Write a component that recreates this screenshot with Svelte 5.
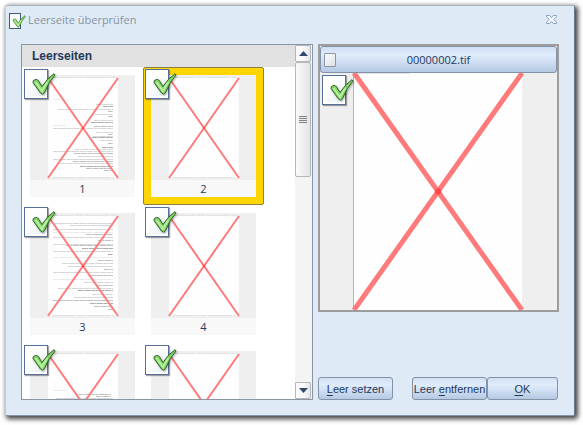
<script>
  let pages = $state([
    { id: 1, blank: true, lines: 'short' },
    { id: 2, blank: true, lines: null },
    { id: 3, blank: true, lines: 'full' },
    { id: 4, blank: true, lines: null },
    { id: 5, blank: true, lines: 'late' },
    { id: 6, blank: true, lines: null }
  ]);

  let selected = $state(2);

  // y, start, end, strength
  const textLines = {
    short: [
      [22, 5, 12, 1], [27, 48, 65, 2], [29, 55, 65, 4], [32, 10, 65, 2], [34, 60, 65, 3],
      [37, 47, 65, 2], [39, 60, 65, 3], [43, 46, 65, 2], [45, 43, 65, 4], [48, 5, 18, 1],
      [49, 46, 65, 3], [51, 5, 65, 2], [55, 48, 65, 2], [57, 60, 65, 3], [59, 45, 65, 2],
      [60, 44, 65, 4], [63, 52, 65, 2], [66, 60, 65, 3], [70, 54, 65, 4], [72, 27, 65, 2],
      [74, 5, 65, 2], [76, 26, 65, 3], [79, 30, 65, 2], [82, 5, 65, 2], [84, 25, 65, 3],
      [86, 12, 65, 2], [89, 32, 65, 4], [91, 38, 65, 3], [93, 56, 65, 3]
    ],
    full: [
      [8, 5, 65, 2], [10, 22, 65, 2], [14, 5, 65, 2], [17, 5, 65, 1], [19, 38, 65, 3],
      [22, 5, 65, 2], [25, 50, 65, 3], [29, 5, 65, 2], [30, 18, 65, 3], [33, 34, 65, 4],
      [36, 5, 65, 2], [39, 60, 65, 4], [42, 5, 65, 1], [45, 50, 65, 3], [48, 14, 65, 2],
      [51, 20, 65, 2], [54, 56, 65, 3], [57, 5, 65, 2], [60, 42, 65, 3], [64, 5, 65, 1],
      [67, 36, 65, 2], [70, 48, 65, 3], [73, 10, 65, 2], [75, 30, 65, 4], [79, 44, 65, 2],
      [82, 26, 65, 2], [85, 5, 65, 3], [88, 42, 65, 4], [91, 46, 65, 3], [94, 60, 65, 3]
    ],
    late: [
      [37, 5, 18, 1], [41, 30, 63, 3], [43, 48, 63, 3], [45, 8, 65, 2], [48, 30, 65, 3],
      [51, 10, 65, 2], [54, 36, 65, 3]
    ]
  };
</script>

{#snippet tick()}
  <svg class="tick" viewBox="0 0 32 30" aria-hidden="true">
    <path
      d="M9 13.5Q8.500 11 11.500 10.500Q13.500 10 14.500 12L18 17.500Q23 9.500 30 4.700L31 6Q24.500 13 20.500 23.500Q18.500 26.500 16.500 24Z"
      fill="#7fd463"
      stroke="#2f6428"
      stroke-linejoin="round"
    />
    <path d="M11.500 13L18 22Q20.500 17 23.500 13" fill="none" stroke="#b9efa0" stroke-width="2" />
  </svg>
{/snippet}

{#snippet mark(page)}
  <label class="mark">
    <input type="checkbox" aria-label="Seite {page.id} ist leer" bind:checked={page.blank} />
    {#if page.blank}{@render tick()}{/if}
  </label>
{/snippet}

<div class="screen">
  <main class="dialog">
    <header class="titlebar">
      <span class="app-icon">{@render tick()}</span>
      <h1>Leerseite überprüfen</h1>
      <button class="close" aria-label="Schließen">
        <svg viewBox="0 0 12 10" aria-hidden="true">
          <path
            d="M.5.5H4L6 3 8 .5h3.500V2L8.500 5l3 3v1.500H8L6 7 4 9.500H.5V8l3-3-3-3Z"
            fill="#f4f9ff"
            stroke="#7f96b2"
          />
        </svg>
      </button>
    </header>

    <div class="content">
      <section class="list">
        <div class="list-main">
          <h2>Leerseiten</h2>
          <div class="tiles">
            {#each pages as page (page.id)}
              <div class="tile" class:selected={page.id === selected}>
                <button class="thumb" onclick={() => (selected = page.id)}>
                  <span class="thumb-area">
                    <svg viewBox="0 0 105 105" aria-hidden="true">
                      <rect x="18" y="2" width="70" height="101" fill="#fefefe" />
                      <path d="M20 2.500H87M22 102.500H84" stroke="#e2e2e2" stroke-dasharray="24 1 9 1" />
                      {#if page.lines}
                        {#each textLines[page.lines] as [y, from, to, strength]}
                          <path
                            d="M{from + 18} {y + 2.5}H{to + 18}"
                            stroke="#444"
                            stroke-opacity={strength * 0.11}
                            stroke-dasharray="4 .4 2 .5 6 .6"
                          />
                        {/each}
                      {/if}
                      {#if page.blank}
                        <path d="M18 3L88 103M88 3L18 103" stroke="#ff7b7b" stroke-width="2" />
                        <rect x="52" y="52" width="2" height="2" fill="#ff4545" />
                      {/if}
                    </svg>
                  </span>
                  <span class="caption">{page.id}</span>
                </button>
                {@render mark(page)}
              </div>
            {/each}
          </div>
        </div>
        <div class="scrollbar">
          <button class="arrow" aria-label="Nach oben">
            <svg viewBox="0 0 9 5" aria-hidden="true"><path d="M0 5L4.500 0 9 5Z" fill="#33456f" /></svg>
          </button>
          <div class="track">
            <div class="handle"><i></i><i></i><i></i><i></i></div>
          </div>
          <button class="arrow" aria-label="Nach unten">
            <svg viewBox="0 0 9 5" aria-hidden="true"><path d="M0 0L4.500 5 9 0Z" fill="#33456f" /></svg>
          </button>
        </div>
      </section>

      <section class="side">
        <div class="viewer">
          <button class="file">
            <span class="file-icon"></span>
            <span class="file-name">0000000{selected}.tif</span>
          </button>
          <div class="preview">
            <svg class="sheet" viewBox="0 0 237 237" aria-hidden="true">
              <rect x="34" width="168" height="237" fill="#fefefe" />
              <path d="M33.500 0V237" stroke="#b5b5b5" />
              <path d="M36 0H90" stroke="#c9c9c9" />
              {#if pages[selected - 1].blank}
                <path d="M34 0L202 237M202 0L34 237" stroke="#ff7b7b" stroke-width="5" />
                <circle cx="118" cy="118.500" r="3" fill="#ff4545" />
              {/if}
            </svg>
            {@render mark(pages[selected - 1])}
          </div>
        </div>

        <footer class="actions">
          <button class="action" onclick={() => (pages[selected - 1].blank = true)}><u>L</u>eer setzen</button>
          <button class="action remove" onclick={() => (pages[selected - 1].blank = false)}>Leer <u>e</u>ntfernen</button>
          <button class="action ok"><u>O</u>K</button>
        </footer>
      </section>
    </div>
  </main>
</div>

<style>
  :global(body) {
    background: #fff;
  }

  .screen,
  .screen * {
    box-sizing: border-box;
  }

  .screen {
    height: 100vh;
    padding: 5px 8px 9px 5px;
    font-family: "Liberation Sans", Arial, sans-serif;
    font-size: 11px;
    color: #1e395b;
  }

  button {
    font: inherit;
    color: inherit;
    padding: 0;
    cursor: pointer;
  }

  svg {
    display: block;
  }

  .dialog {
    height: 100%;
    display: flex;
    flex-direction: column;
    padding: 0 15px 15px;
    background: #deebf7;
    border: 1px solid;
    border-color: #a9b4bf #66788c #8295aa #c0ccd8;
    border-radius: 2px;
    box-shadow: 2px 2px 5px 1px rgba(0, 0, 0, 0.75);
  }

  .titlebar {
    flex: none;
    height: 38px;
    display: flex;
    align-items: flex-start;
    padding-top: 6px;
    margin-left: -12px;
  }

  .app-icon {
    width: 12px;
    height: 16px;
    margin-top: 1px;
    background: #fbfcfe;
    border: 1px solid #44577c;
  }

  .app-icon .tick {
    width: 18px;
    height: 17px;
    margin: -1px 0 0 -2px;
  }

  h1 {
    flex: 1;
    margin: 0 0 0 7px;
    font: 11px/16px "Open Sans", "Noto Sans", sans-serif;
    color: #8791a3;
  }

  .close {
    margin: 3px 2px 0 0;
    border: 0;
    background: none;
  }

  .close svg {
    width: 11px;
    height: 9px;
  }

  .content {
    flex: 1;
    min-height: 0;
    display: grid;
    grid-template-columns: 292fr 241fr;
    grid-template-rows: 100%;
    gap: 5px;
  }

  .list {
    display: flex;
    min-width: 0;
    background: #fff;
    border: 1px solid #8b95a1;
  }

  .list-main {
    flex: 1;
    min-width: 0;
    overflow: hidden;
  }

  h2 {
    margin: 0;
    padding-left: 10px;
    font-size: 12px;
    font-weight: bold;
    line-height: 22px;
    background: #e1e1e1;
  }

  .tiles {
    display: grid;
    grid-template-columns: repeat(auto-fill, 121px);
  }

  .tile {
    position: relative;
    height: 138px;
    padding: 7px;
    border: 1px solid transparent;
    border-radius: 2px;
  }

  .tile.selected {
    background: #ffd500;
    border-color: #8c7f45;
  }

  .thumb {
    display: block;
    width: 105px;
    border: 0;
    background: none;
  }

  .thumb-area {
    display: block;
    background: #efefef;
  }

  .caption {
    display: block;
    font: 11px/17px "Open Sans", "Noto Sans", sans-serif;
    background: #f8f8f8;
  }

  .mark {
    position: absolute;
    top: 1px;
    left: 1px;
    width: 24px;
    height: 30px;
  }

  .mark input {
    appearance: none;
    display: block;
    width: 24px;
    height: 30px;
    margin: 0;
    background: linear-gradient(135deg, #fff 30%, #e9eef5);
    border: 1px solid #566f9c;
    box-shadow: inset 0 0 0 2px #fff, 1px 1px 1px rgba(0, 0, 0, 0.35);
  }

  .mark .tick {
    position: absolute;
    top: 0;
    left: 0;
    width: 32px;
    height: 30px;
    filter: drop-shadow(1px 1px 1px rgba(0, 0, 0, 0.3));
  }

  .scrollbar {
    width: 17px;
    padding-right: 1px;
    display: flex;
    flex-direction: column;
    background: #f4f4f4;
  }

  .arrow {
    flex: none;
    height: 17px;
    display: grid;
    place-items: center;
    background: linear-gradient(90deg, #fafafa 50%, #e3e5e8);
    border: 1px solid #b3b6bb;
    border-radius: 1px;
  }

  .arrow svg {
    width: 9px;
    height: 5px;
  }

  .track {
    flex: 1;
  }

  .handle {
    height: 34%;
    min-height: 115px;
    display: flex;
    flex-direction: column;
    align-items: center;
    justify-content: center;
    gap: 1px;
    background: linear-gradient(90deg, #fbfbfb, #e2e4e7);
    border: 1px solid #b3b6bb;
    border-radius: 2px;
  }

  .handle i {
    width: 8px;
    height: 1px;
    background: #7c7f84;
  }

  .side {
    display: flex;
    flex-direction: column;
    justify-content: space-between;
    min-width: 0;
  }

  .viewer {
    border: 2px solid #9d9d9d;
    background: #efefef;
  }

  .file,
  .action {
    background: linear-gradient(#cfdff3, #dfecfc 30%, #d6e4f6 50%, #b5c9e3);
    border: 1px solid #8492a8;
    border-radius: 3px;
  }

  .file {
    width: 100%;
    height: 27px;
    display: flex;
    align-items: center;
    padding-left: 3px;
    font-family: "Open Sans", "Noto Sans", sans-serif;
  }

  .file-icon {
    width: 12px;
    height: 14px;
    margin-right: -15px;
    background: linear-gradient(135deg, #fff, #dcdee2);
    border: 1px solid #8b95a6;
    border-radius: 1px;
  }

  .file-name {
    flex: 1;
    text-align: center;
  }

  .preview {
    position: relative;
  }

  .preview .mark {
    top: 2px;
    left: 2px;
  }

  .sheet {
    width: 100%;
  }

  .actions {
    display: flex;
    padding-right: 1px;
  }

  .action {
    width: 75px;
    height: 23px;
    white-space: nowrap;
  }

  .action u {
    text-underline-offset: 2px;
  }

  .remove {
    margin-left: auto;
  }

  .ok {
    width: 71px;
  }
</style>
